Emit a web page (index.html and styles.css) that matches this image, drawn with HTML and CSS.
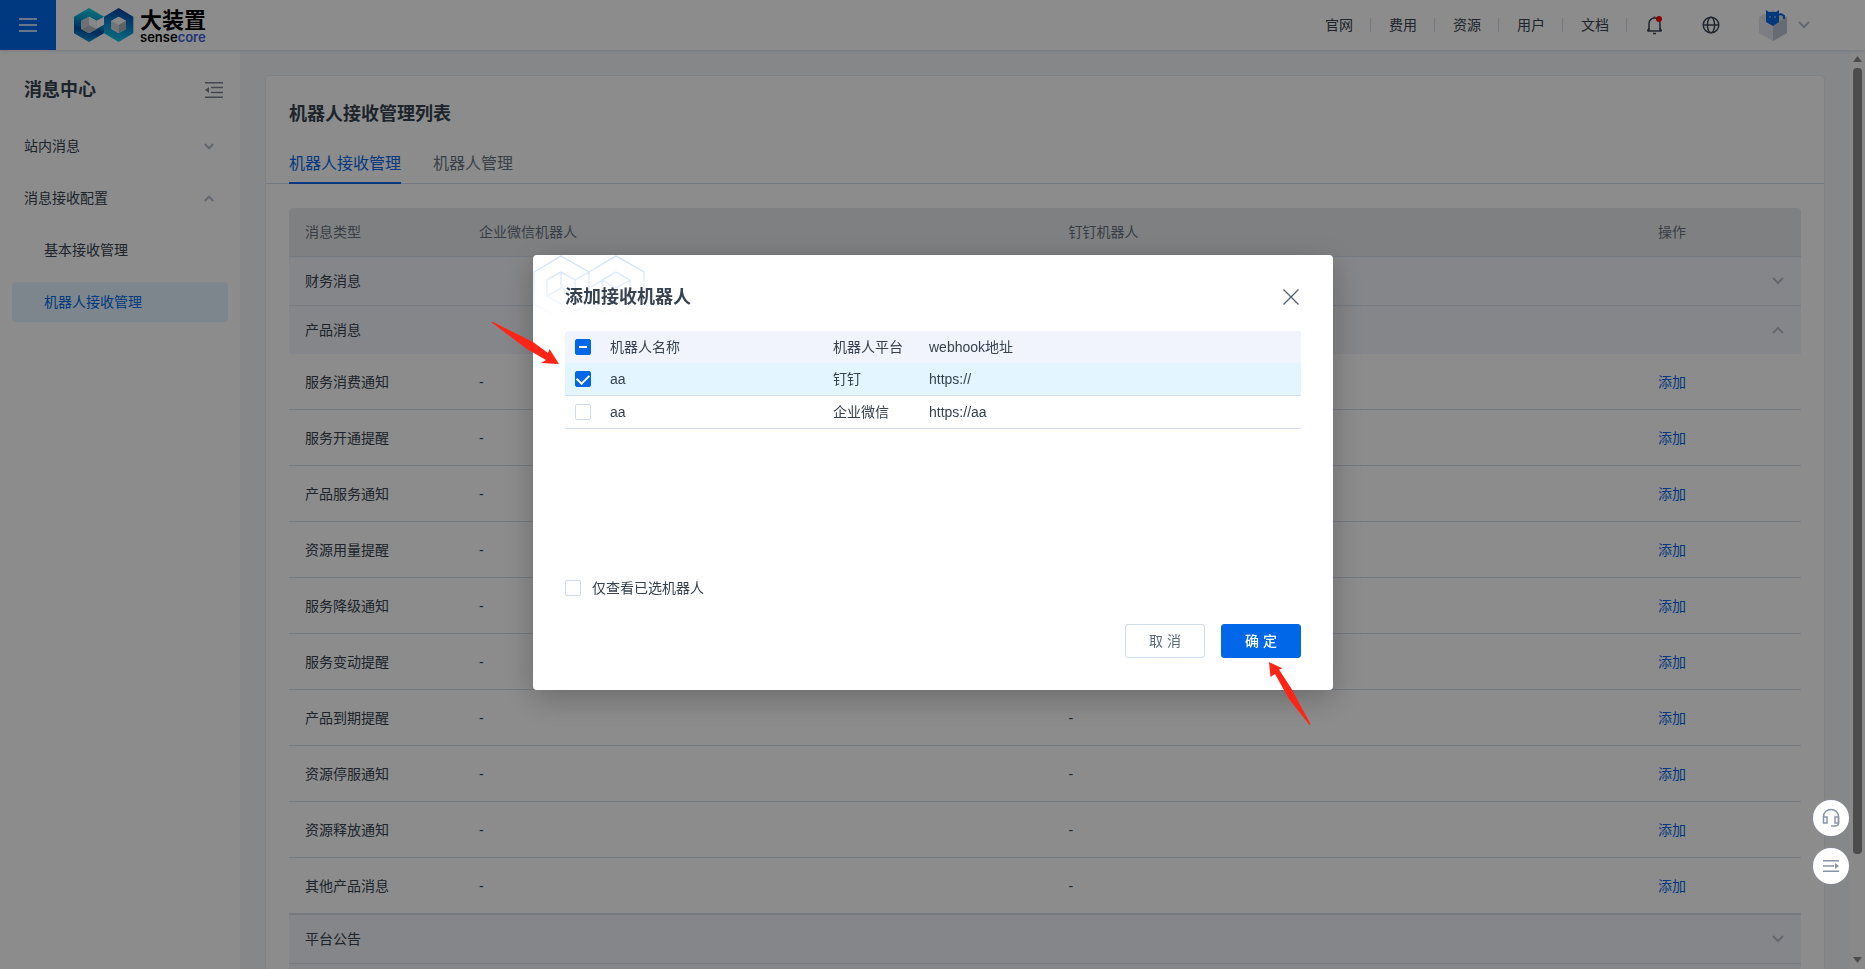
FILE: index.html
```html
<!DOCTYPE html>
<html lang="zh-CN">
<head>
<meta charset="utf-8">
<meta name="viewport" content="width=device-width, initial-scale=1">
<title>消息中心</title>
<link rel="stylesheet" href="styles.css">
</head>
<body>
<div class="app">
  <header class="topbar">
    <button class="burger" type="button" aria-label="菜单">
      <svg width="18" height="14" viewBox="0 0 18 14"><path d="M0 1h18M0 7h18M0 13h18" stroke="#fff" stroke-width="1.6"/></svg>
    </button>
    <a class="logo" href="#">
      <svg width="60" height="34" viewBox="0 0 180 102" aria-hidden="true">
        <defs>
          <linearGradient id="hexLeft" gradientUnits="userSpaceOnUse" x1="50" y1="0" x2="30" y2="102"><stop offset="0" stop-color="#12d0e6"/><stop offset=".35" stop-color="#0a9ccc"/><stop offset=".65" stop-color="#0450a8"/><stop offset="1" stop-color="#0aa0dc"/></linearGradient>
          <linearGradient id="hexRight" gradientUnits="userSpaceOnUse" x1="150" y1="0" x2="125" y2="102"><stop offset="0" stop-color="#043c9c"/><stop offset=".5" stop-color="#0a84d0"/><stop offset="1" stop-color="#10cbe6"/></linearGradient>
        </defs>
        <path d="M45 0 90 26V50L68 62V38L45 26 22 38V63L45 76 90 50V76L45 102 0 76V26Z" fill="url(#hexLeft)"/>
        <path d="M134 0 178 26V76L134 102 90 76V50L134 26 112 38V63L134 76 156 63V38L134 26 90 50V26Z" fill="url(#hexRight)"/>
        <path d="M90 26V50L68 62V38Z" fill="#fff"/>
        <path d="M45 26V51L22 64V38Z" fill="#c9ccd2"/>
        <path d="M45 26 68 38V62L45 51Z" fill="#f3f4f6"/>
        <path d="M22 64 45 51 68 63 45 76Z" fill="#b5b9c0"/>
        <path d="M112 38 134 26 156 38 134 51Z" fill="#f6f7f9"/>
        <path d="M112 38 134 51V76L112 63Z" fill="#d4d6db"/>
        <path d="M156 38 134 51V76L156 63Z" fill="#aeb2b9"/>
      </svg>
      <span class="logo-text"><span class="logo-cn">大装置</span><span class="logo-en">sense<b>core</b></span></span>
    </a>
    <nav class="topnav">
      <a href="#">官网</a><a href="#">费用</a><a href="#">资源</a><a href="#">用户</a><a href="#">文档</a>
    </nav>
    <div class="tools">
      <button class="tool" type="button" aria-label="通知">
        <svg width="18" height="20" viewBox="0 0 18 20" fill="none" stroke="#3a4654" stroke-width="1.5"><path d="M1.500 16h14M3 16V8.500a5.500 5.500 0 0 1 11 0V16"/><path d="M3 13 1.500 16M14 13l1.500 3M8.500 1.500V3"/><path d="M7 18.500h3"/><circle cx="13" cy="4" r="3" fill="red" stroke="none"/></svg>
      </button>
      <button class="tool" type="button" aria-label="语言">
        <svg width="18" height="18" viewBox="0 0 18 18" fill="none" stroke="#3a4654" stroke-width="1.500"><circle cx="9" cy="9" r="7.800"/><ellipse cx="9" cy="9" rx="3.600" ry="7.800"/><path d="M1 9h16"/></svg>
      </button>
      <button class="account" type="button" aria-label="账户">
        <svg width="28" height="32" viewBox="0 0 28 32"><path d="M0 8 14 1l14 7v16l-14 8-14-8Z" fill="#dde0e8"/><path d="M0 8 14 16V32L0 24Z" fill="#e3e6ef"/><path d="M28 8 14 16V32l14-8Z" fill="#bcc3d2"/><path d="M7 1l3 2h7l3-2v12l-6 4-7-4Z" fill="#0766e0"/><path d="M20 6c2-2 4 0 5 1v3" fill="none" stroke="#0766e0" stroke-width="2"/><path d="M10 7h2v2h-2zM15 7h2v2h-2z" fill="#5aa6e8"/></svg>
        <svg width="12" height="8" viewBox="0 0 12 8"><path d="M1 1l5 5 5-5" fill="none" stroke="#b4bcc8" stroke-width="2"/></svg>
      </button>
    </div>
  </header>

  <div class="body">
    <aside class="sidebar">
      <div class="side-head">
        <h2>消息中心</h2>
        <button type="button" aria-label="收起">
          <svg width="18" height="16" viewBox="0 0 18 16"><path d="M0 .8h18M6 5.500h12M6 10.500h12M0 15.200h18" stroke="#7c828b" stroke-width="1.400"/><path d="M0 8 4 5v6Z" fill="#7c828b"/></svg>
        </button>
      </div>
      <nav class="menu">
        <a href="#">站内消息<svg class="chev" width="10" height="7" viewBox="0 0 10 7"><path d="M.7 1 5 5.300 9.300 1"/></svg></a>
        <a href="#">消息接收配置<svg class="chev" width="10" height="7" viewBox="0 0 10 7"><path d="M.7 6 5 1.700 9.300 6"/></svg></a>
        <a class="sub" href="#">基本接收管理</a>
        <a class="sub active" href="#">机器人接收管理</a>
      </nav>
    </aside>

    <main class="main">
      <section class="card">
        <h1>机器人接收管理列表</h1>
        <div class="tabs">
          <button class="tab current" type="button">机器人接收管理</button>
          <button class="tab" type="button">机器人管理</button>
        </div>
        <table class="list">
          <colgroup><col class="c-type"><col><col><col class="c-act"></colgroup>
          <thead><tr><th>消息类型</th><th>企业微信机器人</th><th>钉钉机器人</th><th>操作</th></tr></thead>
          <tbody>
            <tr class="group"><td colspan="3">财务消息</td><td class="toggle"><svg class="chev" width="12" height="8" viewBox="0 0 12 8"><path d="M1 1l5 5 5-5"/></svg></td></tr>
            <tr class="group open"><td colspan="3">产品消息</td><td class="toggle"><svg class="chev" width="12" height="8" viewBox="0 0 12 8"><path d="M1 7l5-5 5 5"/></svg></td></tr>
            <tr><td>服务消费通知</td><td>-</td><td>-</td><td><a href="#">添加</a></td></tr>
            <tr><td>服务开通提醒</td><td>-</td><td>-</td><td><a href="#">添加</a></td></tr>
            <tr><td>产品服务通知</td><td>-</td><td>-</td><td><a href="#">添加</a></td></tr>
            <tr><td>资源用量提醒</td><td>-</td><td>-</td><td><a href="#">添加</a></td></tr>
            <tr><td>服务降级通知</td><td>-</td><td>-</td><td><a href="#">添加</a></td></tr>
            <tr><td>服务变动提醒</td><td>-</td><td>-</td><td><a href="#">添加</a></td></tr>
            <tr><td>产品到期提醒</td><td>-</td><td>-</td><td><a href="#">添加</a></td></tr>
            <tr><td>资源停服通知</td><td>-</td><td>-</td><td><a href="#">添加</a></td></tr>
            <tr><td>资源释放通知</td><td>-</td><td>-</td><td><a href="#">添加</a></td></tr>
            <tr><td>其他产品消息</td><td>-</td><td>-</td><td><a href="#">添加</a></td></tr>
            <tr class="group after"><td colspan="3">平台公告</td><td class="toggle"><svg class="chev" width="12" height="8" viewBox="0 0 12 8"><path d="M1 1l5 5 5-5"/></svg></td></tr>
            <tr class="group"><td colspan="4"></td></tr>
          </tbody>
        </table>
      </section>
    </main>

    <div class="scroll" aria-hidden="true">
      <svg width="9" height="6" viewBox="0 0 9 6"><path d="M4.500 0 9 6H0Z" fill="#8b8b8b"/></svg>
      <div class="track"><div class="thumb"></div></div>
      <svg width="9" height="6" viewBox="0 0 9 6"><path d="M4.500 6 9 0H0Z" fill="#8b8b8b"/></svg>
    </div>
  </div>
</div>

<div class="mask">
  <div class="dialog" role="dialog" aria-modal="true" aria-labelledby="dlg-title">
    <svg class="hexes" width="112" height="64" viewBox="0 0 112 64" aria-hidden="true">
      <defs><linearGradient id="fade" gradientUnits="userSpaceOnUse" x1="0" y1="0" x2="0" y2="64"><stop offset="0" stop-color="#c9dcfd"/><stop offset="1" stop-color="#c9dcfd" stop-opacity="0"/></linearGradient></defs>
      <path d="M28 1 56 17V49L28 64 1 49V17ZM83 1 111 17V49L83 64 56 49V17ZM28 17 42 25V41L28 49 14 41V25ZM28 17V33L14 41M28 33 42 41M42 25 56 17M83 17 97 25V41L83 49 69 41V25ZM69 25 83 33 97 25M83 33V49M56 33 83 17" fill="none" stroke="url(#fade)" stroke-width="1.300"/>
    </svg>
    <div class="dlg-head">
      <h2 id="dlg-title">添加接收机器人</h2>
      <button class="close" type="button" aria-label="关闭"><svg width="16" height="16" viewBox="0 0 16 16"><path d="M.5.5l15 15M15.500.5l-15 15" stroke="#4f6078" stroke-width="1.300"/></svg></button>
    </div>
    <div class="dlg-body">
      <table class="robots">
        <colgroup><col class="r-check"><col class="r-name"><col class="r-plat"><col></colgroup>
        <thead><tr><th><input class="box partial" type="checkbox" aria-label="全选"></th><th>机器人名称</th><th>机器人平台</th><th>webhook地址</th></tr></thead>
        <tbody>
          <tr class="picked"><td><input class="box" type="checkbox" aria-label="选择 aa 钉钉" checked></td><td>aa</td><td>钉钉</td><td>https://</td></tr>
          <tr><td><input class="box" type="checkbox" aria-label="选择 aa 企业微信"></td><td>aa</td><td>企业微信</td><td>https://aa</td></tr>
        </tbody>
      </table>
    </div>
    <label class="only"><input class="box" type="checkbox">仅查看已选机器人</label>
    <div class="dlg-foot">
      <button class="btn" type="button">取 消</button>
      <button class="btn primary" type="button">确 定</button>
    </div>
    <svg class="arrow arrow-left" width="70" height="44" viewBox="0 0 70 44" aria-hidden="true"><path d="M0 0H2L42 20 57 31 58.500 27 68 42 50 41 55 38 36 27Z" fill="#ff2416"/></svg>
    <svg class="arrow arrow-right" width="42" height="64" viewBox="0 0 42 64" aria-hidden="true"><path d="M0 0 13.500 6.500 10 7.500 22 26 41.500 62 40.500 63 20 37 6 12 1.500 15Z" fill="#ff2416"/></svg>
  </div>
</div>

<div class="floats">
  <button type="button" aria-label="客服"><svg width="18" height="20" viewBox="0 0 18 20" fill="none" stroke="#8894ad" stroke-width="1.500"><path d="M1.500 9V8.500a7.500 7 0 0 1 15 0V15q0 3-4 3H9"/><path d="M1.500 9H5v6H1.500ZM13 9h3.500v6H13Z"/></svg></button>
  <button type="button" aria-label="展开"><svg width="16" height="12" viewBox="0 0 16 12"><path d="M0 .8h16M0 6h11M0 11.200h16" stroke="#8894ad" stroke-width="1.400"/><path d="M12 3v6l4-3Z" fill="#8894ad"/></svg></button>
</div>
</body>
</html>
```
FILE: styles.css
```css
* { box-sizing: border-box; }

body {
  margin: 0;
  font: 14px/22px "Liberation Sans", "Noto Sans CJK SC", sans-serif;
  color: #36424f;
}

h1, h2 { margin: 0; font-size: 18px; line-height: 28px; font-weight: 700; }
a { color: inherit; text-decoration: none; }
button { border: 0; padding: 0; background: none; font: inherit; color: inherit; cursor: pointer; }
svg { display: block; flex: none; }
table { width: 100%; border-spacing: 0; table-layout: fixed; }
th, td { text-align: left; font-weight: 400; }
.chev { fill: none; stroke: #b4bcc8; stroke-width: 2; }

.app { height: 100vh; display: flex; flex-direction: column; overflow: hidden; }

/* top bar */
.topbar {
  display: flex;
  flex: none;
  align-items: center;
  height: 50px;
  padding-right: 54px;
  background: #fff;
  box-shadow: 0 1px 4px #d3dcec;
  z-index: 1;
}
.burger { width: 56px; height: 50px; display: grid; place-items: center; background: #0068e8; }
.logo { display: flex; align-items: center; gap: 6px; margin-left: 18px; color: #000; }
.logo-text { display: flex; flex-direction: column; }
.logo-cn { font: 700 22px/24px "Noto Sans CJK SC", sans-serif; }
.logo-en { font: 600 13px/14px Inter, "Liberation Sans", sans-serif; }
.logo-en b { font-weight: 600; color: #3a62d8; }
.topnav { display: flex; margin-left: auto; }
.topnav a { line-height: 14px; padding: 0 17px 0 18px; border-right: 1px solid #d3dcec; }
.tools { display: flex; align-items: center; }
.tool { display: grid; place-items: center; width: 56px; height: 32px; }
.account { display: flex; align-items: center; gap: 11px; margin-left: 20px; padding-right: 1px; }

/* side menu */
.body { flex: 1; display: flex; min-height: 0; }
.sidebar { flex: none; width: 240px; padding: 26px 12px; background: #fff; }
.side-head { display: flex; justify-content: space-between; align-items: center; padding: 0 5px 0 12px; }
.menu { display: flex; flex-direction: column; gap: 12px; margin-top: 22px; }
.menu a {
  display: flex;
  justify-content: space-between;
  align-items: center;
  height: 40px;
  padding: 0 14px 0 12px;
  border-radius: 4px;
}
.menu .sub { padding-left: 32px; }
.menu .active { background: #e3f5ff; color: #0068e8; }

/* content */
.main { flex: 1; min-width: 0; padding: 25px 25px 0; background: #f4f6fa; overflow: hidden; }
.card { background: #fff; border: 1px solid #e6ebf5; border-radius: 4px; padding: 24px 0 0; }
.card h1 { padding: 0 23px; }
.tabs { display: flex; gap: 32px; margin-top: 24px; padding: 0 23px; box-shadow: inset 0 -1px #d3dcec; }
.tab { height: 32px; padding-bottom: 6px; border-bottom: 2px solid transparent; font-size: 16px; line-height: 24px; color: #6b7684; }
.tab.current { color: #0068e8; border-color: #0068e8; }
.list { width: calc(100% - 46px); margin: 24px 23px 0; }
.c-type { width: 174px; }
.c-act { width: 159px; }
.list th, .list td { padding: 0 16px; border-bottom: 1px solid #d5dcea; }
.list th { height: 49px; background: #e8eaec; color: #67727f; }
.list th:first-child { border-top-left-radius: 4px; }
.list th:last-child { border-top-right-radius: 4px; }
.list td { height: 56px; }
.list a { color: #0068e8; }
.list .group td { height: 49px; background: #f3f4f9; }
.list .open td { height: 48px; border-bottom: 0; }
.list .after td { height: 50px; border-top: 1px solid #d5dcea; }
.list .toggle { padding-right: 17px; }
.toggle svg { margin-left: auto; }

/* page scroll bar */
.scroll { flex: none; width: 15px; display: flex; flex-direction: column; align-items: center; padding: 6px 0; background: #fafafa; }
.track { flex: 1; width: 9px; margin: 6px 0; }
.thumb { height: 89%; border-radius: 4px; background: #8b8b8b; }

/* dialog */
.mask {
  position: fixed;
  inset: 0;
  z-index: 10;
  display: flex;
  align-items: center;
  justify-content: center;
  padding: 0 0 24px 1px;
  background: rgba(0, 0, 0, .45);
}
.dialog {
  position: relative;
  width: 800px;
  padding: 28px 32px 32px;
  background: #fff;
  border-radius: 4px;
  box-shadow: 0 8px 32px rgba(0, 0, 0, .25);
}
.hexes { position: absolute; left: 0; top: 0; }
.dlg-head { position: relative; display: flex; justify-content: space-between; align-items: center; }
.close { display: grid; place-items: center; width: 20px; height: 20px; }
.dlg-body { height: 222px; margin-top: 20px; }
.robots th, .robots td { height: 33px; padding: 0; border-bottom: 1px solid #d3dff0; }
.robots th { height: 32px; background: #f1f4fd; border: 0; }
.robots th:first-child { border-top-left-radius: 4px; padding-left: 10px; }
.robots td:first-child { padding-left: 10px; }
.picked td { background: #e3f5ff; }
.r-check { width: 45px; }
.r-name { width: 223px; }
.r-plat { width: 96px; }

.box {
  appearance: none;
  display: grid;
  place-items: center;
  width: 16px;
  height: 16px;
  margin: 0;
  border: 1px solid #cfdcee;
  border-radius: 2px;
  background: #fff;
}
.box:checked, .box.partial { background: #0068e8; border-color: #0068e8; }
.box.partial::before { content: ""; width: 8px; height: 2px; background: #fff; }
.box:checked::before {
  content: "";
  width: 10px;
  height: 6px;
  margin-bottom: 2px;
  border: solid #fff;
  border-width: 0 0 2px 2px;
  transform: rotate(-45deg);
}
.only { display: flex; align-items: center; gap: 11px; margin-top: 24px; }
.dlg-foot { display: flex; justify-content: flex-end; gap: 16px; margin-top: 25px; }
.btn { width: 80px; height: 34px; border: 1px solid #cfdcee; border-radius: 3px; color: #5b6b80; }
.btn.primary { background: #0068e8; border-color: #0068e8; color: #fff; font-weight: 500; }

/* pointers laid over the dialog edges */
.arrow { position: absolute; }
.arrow-left { left: -42px; top: 67px; }
.arrow-right { left: 736px; top: 407px; }

/* floating help buttons */
.floats { position: fixed; right: 16px; bottom: 85px; z-index: 11; display: flex; flex-direction: column; gap: 12px; }
.floats button { display: grid; place-items: center; width: 36px; height: 36px; border-radius: 50%; background: #fff; box-shadow: 0 0 2px #8894ad; }
```
